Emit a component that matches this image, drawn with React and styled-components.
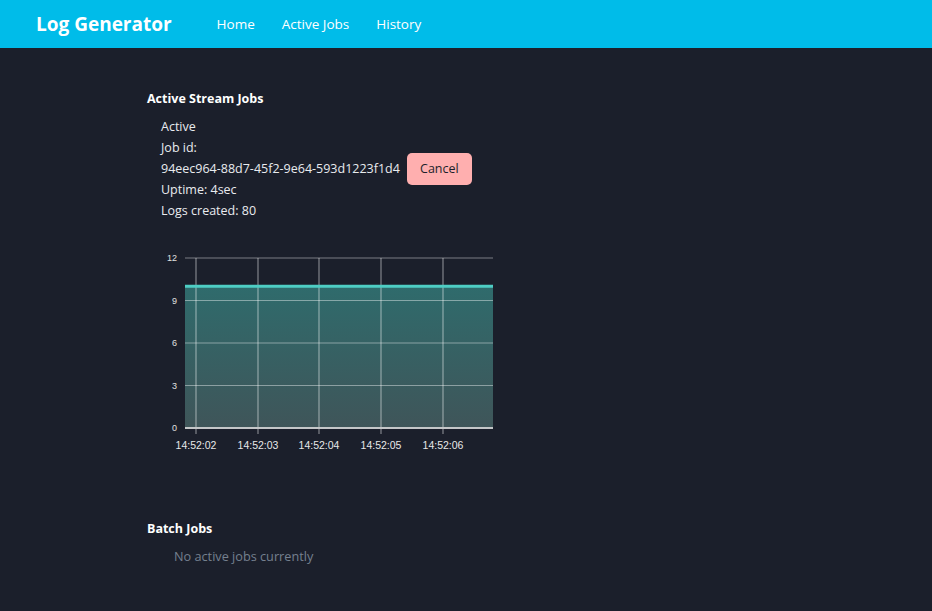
import React from "react";
import styled, { createGlobalStyle } from "styled-components";

const GlobalStyle = createGlobalStyle`
  body {
    margin: 0;
    background: #1b1f2b;
    font-family: "Segoe UI", "Open Sans", "Noto Sans", sans-serif;
    color: #e9ebef;
  }
`;

const Header = styled.header`
  height: 48px;
  background: #00bce9;
  display: flex;
  align-items: center;
  padding-left: 36px;
`;
const Brand = styled.div`
  font-size: 19px;
  font-weight: 700;
  color: #fff;
  margin-right: 45px;
  margin-top: -1px;
`;
const NavLinks = styled.nav`
  display: flex;
  gap: 27px;
`;
const NavLink = styled.a`
  color: #fff;
  font-size: 13.5px;
  text-decoration: none;
  margin-top: -1px;
`;

const Main = styled.main`
  padding: 42px 0 40px 147px;
`;
const SectionTitle = styled.h2`
  margin: 0;
  font-size: 12.5px;
  font-weight: 700;
  line-height: 17px;
  color: #fff;
`;
const JobCard = styled.div`
  margin: 9px 0 0 14px;
  font-size: 12.5px;
  line-height: 21px;
`;
const Line = styled.div`
  height: 21px;
  display: flex;
  align-items: center;
`;
const CancelButton = styled.button`
  margin-left: 7px;
  height: 32px;
  width: 65px;
  border: none;
  border-radius: 5px;
  background: #ffafaf;
  color: #1b1f2b;
  font-family: inherit;
  font-size: 12.5px;
  flex-shrink: 0;
`;
const ChartWrap = styled.div`
  margin-top: 19px;
  width: 360px;
  height: 220px;
`;
const Empty = styled.div`
  margin: 10px 0 0 27px;
  font-size: 12.7px;
  color: #75808f;
`;
const BatchSection = styled.section`
  margin-top: 60px;
`;

const X0 = 147;
const Y0 = 240;
const plot = { left: 185, right: 493, top: 258, bottom: 428 };
const yFor = (v) => plot.bottom - (v / 12) * (plot.bottom - plot.top);
const xTicks = [
  { x: 196, label: "14:52:02" },
  { x: 258, label: "14:52:03" },
  { x: 319, label: "14:52:04" },
  { x: 381, label: "14:52:05" },
  { x: 443, label: "14:52:06" },
];

function LogsChart() {
  const lineY = yFor(10);
  return (
    <svg width="360" height="220" viewBox={`${X0} ${Y0} 360 220`}>
      <defs>
        <linearGradient id="fill" x1="0" y1="0" x2="0" y2="1">
          <stop offset="0" stopColor="#2f6b6c" />
          <stop offset="1" stopColor="#3f5559" />
        </linearGradient>
      </defs>
      <rect x={plot.left} y={lineY} width={plot.right - plot.left} height={plot.bottom - lineY} fill="url(#fill)" />
      {[3, 6, 9, 12].map((v) => (
        <line key={v} x1={plot.left} x2={plot.right} y1={yFor(v)} y2={yFor(v)} stroke="#fff" strokeOpacity="0.42" strokeWidth="1.2" />
      ))}
      {xTicks.map((t) => (
        <line key={t.x} x1={t.x} x2={t.x} y1={plot.top} y2={plot.bottom + 6} stroke="#fff" strokeOpacity="0.45" strokeWidth="1.2" />
      ))}
      <line x1={plot.left} x2={plot.right} y1={lineY} y2={lineY} stroke="#4ecdc4" strokeWidth="3" />
      <line x1={plot.left} x2={plot.right} y1={plot.bottom} y2={plot.bottom} stroke="#c4c6c8" strokeWidth="2" />
      {[0, 3, 6, 9, 12].map((v) => (
        <text key={v} x={177} y={yFor(v) + 3} textAnchor="end" fontSize="9" fill="#e0e0e0" fontFamily="Liberation Sans, Arial, sans-serif">
          {v}
        </text>
      ))}
      {xTicks.map((t) => (
        <text key={t.label} x={t.x} y={449} textAnchor="middle" fontSize="10.5" fill="#e8e8e8" fontFamily="Liberation Sans, Arial, sans-serif">
          {t.label}
        </text>
      ))}
    </svg>
  );
}

export default function App() {
  return (
    <>
      <GlobalStyle />
      <Header>
        <Brand>Log Generator</Brand>
        <NavLinks>
          <NavLink href="#">Home</NavLink>
          <NavLink href="#">Active Jobs</NavLink>
          <NavLink href="#">History</NavLink>
        </NavLinks>
      </Header>
      <Main>
        <section>
          <SectionTitle>Active Stream Jobs</SectionTitle>
          <JobCard>
            <Line>Active</Line>
            <Line>Job id:</Line>
            <Line>
              94eec964-88d7-45f2-9e64-593d1223f1d4
              <CancelButton>Cancel</CancelButton>
            </Line>
            <Line>Uptime: 4sec</Line>
            <Line>Logs created: 80</Line>
          </JobCard>
          <ChartWrap>
            <LogsChart />
          </ChartWrap>
        </section>
        <BatchSection>
          <SectionTitle>Batch Jobs</SectionTitle>
          <Empty>No active jobs currently</Empty>
        </BatchSection>
      </Main>
    </>
  );
}
